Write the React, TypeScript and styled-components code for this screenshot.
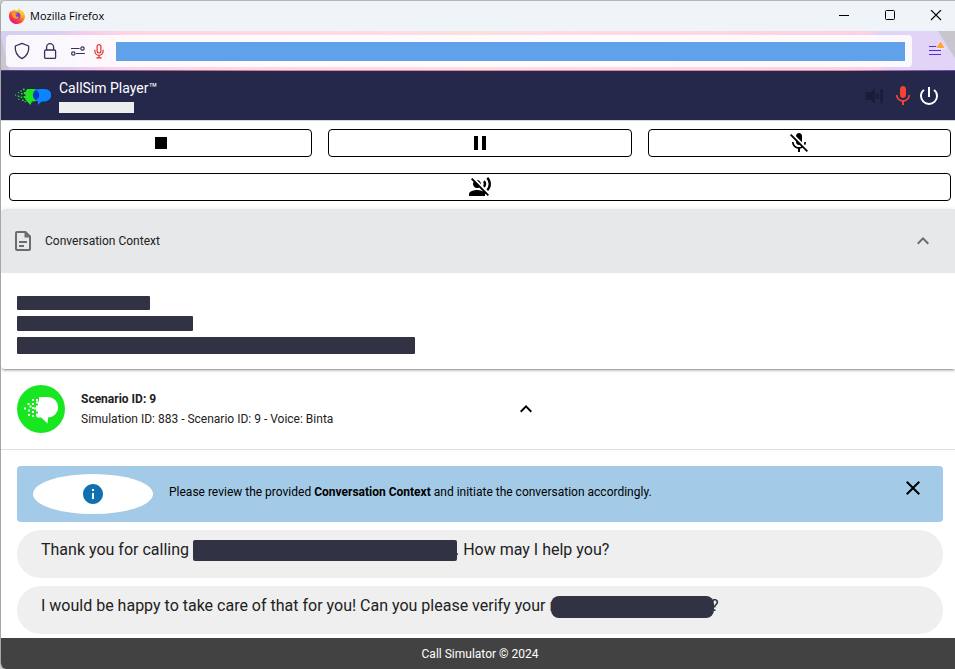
import React, { useState } from "react";
import styled, { createGlobalStyle } from "styled-components";
import {
  MdClose,
  MdExpandLess,
  MdInfo,
  MdMic,
  MdMicOff,
  MdPause,
  MdPowerSettingsNew,
  MdStop,
  MdVoiceOverOff,
} from "react-icons/md";

const GlobalStyle = createGlobalStyle`
  *, *::before, *::after { box-sizing: border-box; }
  body {
    margin: 0;
    background: #c8c8c8;
    color: #212121;
    font-family: Roboto, "Liberation Sans", sans-serif;
    font-size: 12px;
    line-height: 20px;
  }
  button { font: inherit; color: inherit; cursor: pointer; }
  svg { display: block; flex: none; }
`;

const Window = styled.div`
  display: flex;
  flex-direction: column;
  min-height: 100vh;
  overflow: hidden;
  background: #fff;
  border-top: 1px solid #b4b6b8;
  border-left: 1px solid #a6a6a6;
  border-radius: 6px 0 0 6px;
`;

const TitleBar = styled.div`
  display: flex;
  align-items: center;
  gap: 5px;
  height: 30px;
  padding-left: 8px;
  background: #eff4f9;
`;

const WindowTitle = styled.span`
  flex: 1;
  color: #000;
  font-family: "Open Sans", "Noto Sans", sans-serif;
  font-size: 11px;
`;

const WindowControls = styled.div`
  display: flex;
  gap: 8px;
`;

const PlainButton = styled.button<{ $w: number; $h: number }>`
  display: flex;
  align-items: center;
  justify-content: center;
  width: ${(p) => p.$w}px;
  height: ${(p) => p.$h}px;
  padding: 0;
  border: 0;
  background: none;
`;

const BrowserBar = styled.div`
  display: flex;
  align-items: center;
  height: 40px;
  padding-left: 5px;
  background:
    linear-gradient(90deg, #5b3f7a, #d88aa6 30%, #d88aa6 88%, #6a3fb0) bottom / 100% 1px no-repeat,
    linear-gradient(238deg, #c9c5cd 0 14px, transparent 15px),
    linear-gradient(75deg, #cbc5d2 0 8px, #d9cef0 9px 60px, #f3cdf0 90px, #fdd6e4 130px, #fddfe0 50%, #fbd2e6 91%, #e2d4f7 92%);
`;

const AddressBar = styled.div`
  display: flex;
  flex: 1;
  align-items: center;
  height: 32px;
  padding: 0 7px 0 6px;
  border-radius: 4px;
  background: rgba(255, 255, 255, 0.85);
`;

const AddressIcons = styled.div`
  display: flex;
  align-items: center;
  gap: 8px;
  width: 104px;
`;

const AddressInput = styled.input`
  flex: 1;
  min-width: 0;
  height: 19px;
  padding: 0;
  border: 0;
  background: #5fa2e9;
`;

const MenuButton = styled(PlainButton)`
  padding-left: 6px;
`;

const AppHeader = styled.header`
  display: flex;
  align-items: center;
  gap: 8px;
  height: 50px;
  padding: 0 14px;
  background: #25274b;
  border-bottom: 1px solid #d5d6da;
`;

const Brand = styled.div`
  display: flex;
  flex: 1;
  flex-direction: column;
  align-items: flex-start;
  gap: 4px;
`;

const BrandName = styled.h1`
  margin: 0;
  color: #fff;
  font-size: 14px;
  font-weight: 400;
  line-height: 20px;
`;

const HeaderActions = styled.div`
  display: flex;
  gap: 2px;
`;

const Redacted = styled.span<{ $w: number; $h: number; $light?: boolean }>`
  display: block;
  width: ${(p) => p.$w}px;
  max-width: 100%;
  height: ${(p) => p.$h}px;
  border-radius: ${(p) => (p.$light ? 0 : 1)}px;
  background: ${(p) => (p.$light ? "#eceeef" : "#313244")};
`;

const InlineRedacted = styled.span<{ $w: number; $round?: boolean }>`
  display: inline-block;
  width: ${(p) => p.$w}px;
  height: ${(p) => (p.$round ? 22 : 21)}px;
  margin: ${(p) => (p.$round ? "0 -3px 0 -4px" : "0 -2px 0 0")};
  border-radius: ${(p) => (p.$round ? 8 : 2)}px;
  background: #313244;
  position: relative;
  vertical-align: middle;
`;

const Controls = styled.div`
  display: grid;
  grid-template-columns: repeat(3, 1fr);
  gap: 16px;
  padding: 8px 4px 8px 8px;
`;

const ControlButton = styled.button<{ $wide?: boolean }>`
  display: flex;
  align-items: center;
  justify-content: center;
  grid-column: ${(p) => (p.$wide ? "1 / -1" : "auto")};
  height: 28px;
  padding: 0;
  border: 1px solid #000;
  border-radius: 4px;
  background: #fff;
  color: #000;
`;

const ContextPanel = styled.section`
  border-radius: 4px 0 0 4px;
  background: #fff;
  box-shadow: 0 3px 1px -2px rgba(0, 0, 0, 0.2), 0 2px 2px rgba(0, 0, 0, 0.14),
    0 1px 5px rgba(0, 0, 0, 0.12);
`;

const PanelHeader = styled.button`
  display: flex;
  align-items: center;
  gap: 10px;
  width: 100%;
  height: 64px;
  padding: 0 20px 0 10px;
  border: 0;
  border-radius: 4px 0 0 0;
  background: #e7e8ea;
  color: #6c6c6e;
  text-align: left;
`;

const PanelTitle = styled.span`
  flex: 1;
  color: #212121;
`;

const PanelBody = styled.div`
  display: flex;
  flex-direction: column;
  gap: 6px;
  padding: 23px 16px 15px;
`;

const Scenario = styled.section`
  display: grid;
  grid-template-columns: 48px 1fr 1fr;
  gap: 16px;
  align-items: center;
  padding: 16px 24px 16px 16px;
  border-bottom: 1px solid #e0e0e0;
`;

const ScenarioTitle = styled.h2`
  margin: 0;
  font-size: 12px;
  font-weight: 700;
  line-height: 20px;
`;

const ScenarioDetail = styled.p`
  margin: 0;
`;

const Conversation = styled.main`
  display: flex;
  flex: 1;
  flex-direction: column;
  gap: 8px;
  padding: 16px 12px 4px 16px;
`;

const Notice = styled.div`
  display: flex;
  gap: 16px;
  padding: 8px 16px;
  border-radius: 4px;
  background: #a3cbe7;
  color: #000;
`;

const NoticeBadge = styled.span`
  display: flex;
  align-items: center;
  justify-content: center;
  width: 120px;
  height: 40px;
  border-radius: 50%;
  background: #fff;
  color: #1171b0;
`;

const NoticeText = styled.p`
  flex: 1;
  margin: 0;
  padding: 8px 0;
`;

const Message = styled.p`
  min-height: 48px;
  margin: 0;
  padding: 8px 24px;
  border-radius: 24px;
  background: #efefef;
  font-size: 16px;
  line-height: 24px;
`;

const Footer = styled.footer`
  padding: 6px 0 5px 4px;
  background: #424242;
  color: #fff;
  font-size: 12px;
  text-align: center;
`;

const FirefoxLogo = () => (
  <svg width="16" height="16" viewBox="0 0 16 16" aria-hidden="true">
    <defs>
      <linearGradient id="fox" x1="0.85" y1="0.05" x2="0.25" y2="0.95">
        <stop offset="0" stopColor="#fff24a" />
        <stop offset="0.4" stopColor="#ff9a1f" />
        <stop offset="0.7" stopColor="#ff3f45" />
        <stop offset="1" stopColor="#e2177c" />
      </linearGradient>
    </defs>
    <path
      d="M1.4 3.1c.1.5.2.8.4 1C2.6 3 3.6 2.6 4.2 2.6 5 1.6 6 1.4 6.3 1.4c-.3.5-.3.9-.1 1.2C8 2.6 9 2.4 9.3 1.8 9.3 1 9.5.4 10.1 0c.3 1.5 1.5 2.1 2.5 3.1.3 0 .5-.2.6-.5C14.9 4.2 16 6.2 16 8.300 16 12.6 12.4 16 8 16S0 12.600 0 8.200C0 6.200.6 4.400 1.400 3.100Z"
      fill="url(#fox)"
    />
    <circle cx="8" cy="7.800" r="3.400" fill="#7a3fe0" />
    <path d="M2.600 5.200c1.700-.7 3-.5 4.200.3l1.600.3c-.3.9-1.600 1-1.800 1.800.2 1.200 1.800 1.700 3.500.8-.7 2.300-3.100 3.100-5.300 1.600C3.600 8.900 3.100 7 2.600 5.200Z" fill="#ff9a2c" />
    <path d="M10 3.600c2.400 1.500 2.800 4.200 1.900 6.300 1.500-1.200 1.900-3 1.500-4.500-.9-1.400-2-1.900-3.400-1.800Z" fill="#ffc62e" />
  </svg>
);

const ShieldIcon = () => (
  <svg width="20" height="20" viewBox="0 0 20 20" fill="none" stroke="#3b2f57" strokeWidth="1.300" strokeLinejoin="round" aria-hidden="true">
    <path d="M10 2.400 16.700 5c.4 5.200-1.900 10.300-6.700 12.600C5.200 15.300 2.900 10.200 3.300 5Z" />
  </svg>
);

const LockIcon = () => (
  <svg width="20" height="20" viewBox="0 0 20 20" fill="none" stroke="#3b2f57" strokeWidth="1.300" aria-hidden="true">
    <rect x="4.600" y="9" width="11" height="8.400" rx="1.200" />
    <path d="M6.600 9V6.200a3.500 3.500 0 0 1 7 0V9" />
  </svg>
);

const PermissionsIcon = () => (
  <svg width="18" height="16" viewBox="0 0 18 16" fill="none" stroke="#3b2f57" strokeWidth="1.200" aria-hidden="true">
    <path d="M3 5.500h8.600M8 10.500h8.800" />
    <circle cx="14.500" cy="5.500" r="1.700" />
    <circle cx="5.300" cy="10.500" r="1.700" />
  </svg>
);

const BarMicIcon = () => (
  <svg width="10" height="16" viewBox="0 0 10 16" fill="none" stroke="#e2302c" strokeWidth="1.200" aria-hidden="true">
    <rect x="3.100" y="1.600" width="3.800" height="8.400" rx="1.900" />
    <path d="M.9 6.800v1.400a4.100 4.100 0 0 0 8.200 0V6.800M5 12.300v2.400M2.400 14.800h5.200" />
  </svg>
);

const MenuIcon = () => (
  <svg width="18" height="20" viewBox="0 0 18 20" aria-hidden="true">
    <path d="M1 5.500h12M1 9.500h12M1 13.500h12" stroke="#5b2bd0" strokeWidth="1.200" />
    <path d="M12.500-.8c.4 0 .7.200.9.500l4 7c.4.800 0 1.600-.9 1.600H8.500c-.9 0-1.300-.8-.9-1.600l4-7c.2-.3.500-.5.900-.5Z" fill="#eee5fb" />
    <path d="M12.500.900 15.800 6.500H9.200Z" fill="#ffa436" stroke="#ffa436" strokeLinejoin="round" />
  </svg>
);

const DocumentIcon = () => (
  <svg width="24" height="24" viewBox="0 0 24 24" aria-hidden="true">
    <path
      d="M6 3h8.500L19 7.500V20a1 1 0 0 1-1 1H6a1 1 0 0 1-1-1V4a1 1 0 0 1 1-1Z"
      fill="none"
      stroke="currentColor"
      strokeWidth="2"
    />
    <path d="M13.500 3v5.500H19L14.500 3ZM8 12h8v2H8ZM8 16h5v2H8Z" fill="currentColor" />
  </svg>
);

const PlayerLogo = () => (
  <svg width="36" height="18" viewBox="0 0 36 18" aria-label="CallSim logo" role="img">
    <path d="M12 2h7a5.800 6 0 0 1 0 12.400h-2L15.400 18l-3.600-3.800-1.600-1.600V11H8.600V9h1.800V7.200H8.800V5h2V3H12Z" fill="#1ee51e" />
    <path
      d="M8 1.600h1.600v1.600H8zM5.400 3.200h1.500v1.500H5.400zM3 5h1.200v1.200H3zM6 6h1.600v1.600H6zM2.800 8.600h1.500v1.500H2.800zM0 7.600h1.200v1.200H0zM5.600 9.400h1.600V11H5.600zM3.200 11.800h1.200V13H3.200zM7 12.400h1.600V14H7zM9.600 14h1.200v1.200H9.600z"
      fill="#1ee51e"
    />
    <path d="M24 2h6a6.200 6.200 0 0 1 0 12.400h-3.400L22.800 18l.3-3.600C16 12.600 16 3.200 24 2Z" fill="#0a84ff" />
    <path d="M20.800 3.100c4.600 2.600 4.600 7.600 0 10.200-3.700-2.600-3.700-7.600 0-10.200Z" fill="#0b39c4" />
  </svg>
);

const SpeakerIcon = () => (
  <svg width="24" height="24" viewBox="0 0 24 24" fill="#1a1c38" aria-hidden="true">
    <path d="M.7 8h5.100l4.200-3.800v15.600L5.800 16H.7ZM11.300 9.300h2.400v5.800h-2.400ZM15.300 5h2.400v14.200h-2.400Z" />
  </svg>
);

const ScenarioAvatar = () => (
  <svg width="48" height="48" viewBox="0 0 48 48" aria-hidden="true">
    <circle cx="24" cy="24" r="24" fill="#18e621" />
    <path d="M22 12h9a10 10 0 0 1 0 20.400l-.4 6-6.400-6H20v-2h-1v-2h2v-2h-2v-2h-2v-2h2v-2h2v-2h-2v-2h3Z" fill="#fff" />
    <path
      d="M15 14h2v2h-2zM19 14h2v2h-2zM10.500 18h2v2h-2zM15 18h2v2h-2zM12.500 20.500h2v2h-2zM7 22.500h2v2H7zM11 24.500h2v2h-2zM15 22h2v2h-2zM15 26h2v2h-2zM11 29h2v2h-2zM15 30h2v2h-2zM19 29.500h2v2h-2z"
      fill="#fff"
    />
  </svg>
);

const controls = [
  { label: "Stop", Icon: MdStop },
  { label: "Pause", Icon: MdPause },
  { label: "Mute microphone", Icon: MdMicOff },
  { label: "Voice over off", Icon: MdVoiceOverOff, wide: true },
];

export default function App() {
  const [contextOpen, setContextOpen] = useState(true);
  const [noticeOpen, setNoticeOpen] = useState(true);

  return (
    <>
      <GlobalStyle />
      <Window>
        <TitleBar>
          <FirefoxLogo />
          <WindowTitle>Mozilla Firefox</WindowTitle>
          <WindowControls>
            <PlainButton $w={38} $h={30} aria-label="Minimize">
              <svg width="12" height="12" viewBox="0 0 12 12" stroke="#000">
                <path d="M1 5.500h10" />
              </svg>
            </PlainButton>
            <PlainButton $w={38} $h={30} aria-label="Maximize">
              <svg width="12" height="12" viewBox="0 0 12 12" fill="none" stroke="#000">
                <rect x="1.500" y="0.500" width="9" height="9" rx="1" />
              </svg>
            </PlainButton>
            <PlainButton $w={38} $h={30} aria-label="Close window">
              <svg width="12" height="12" viewBox="0 0 12 12" stroke="#000" strokeWidth="1.100">
                <path d="m1 0 10 10M11 0 1 10" />
              </svg>
            </PlainButton>
          </WindowControls>
        </TitleBar>

        <BrowserBar>
          <AddressBar>
            <AddressIcons>
              <ShieldIcon />
              <LockIcon />
              <PermissionsIcon />
              <BarMicIcon />
            </AddressIcons>
            <AddressInput aria-label="Address" />
          </AddressBar>
          <MenuButton $w={43} $h={32} aria-label="Open application menu">
            <MenuIcon />
          </MenuButton>
        </BrowserBar>

        <AppHeader>
          <PlayerLogo />
          <Brand>
            <BrandName>CallSim Player™</BrandName>
            <Redacted $w={75} $h={11} $light />
          </Brand>
          <HeaderActions>
            <PlainButton $w={24} $h={24} aria-label="Speaker">
              <SpeakerIcon />
            </PlainButton>
            <PlainButton $w={24} $h={24} aria-label="Microphone">
              <MdMic size={24} color="#f44336" />
            </PlainButton>
            <PlainButton $w={24} $h={24} aria-label="Power">
              <MdPowerSettingsNew size={24} color="#fff" />
            </PlainButton>
          </HeaderActions>
        </AppHeader>

        <Controls>
          {controls.map(({ label, Icon, wide }) => (
            <ControlButton key={label} $wide={wide} aria-label={label}>
              <Icon size={24} />
            </ControlButton>
          ))}
        </Controls>

        <ContextPanel>
          <PanelHeader aria-expanded={contextOpen} onClick={() => setContextOpen(!contextOpen)}>
            <DocumentIcon />
            <PanelTitle>Conversation Context</PanelTitle>
            <MdExpandLess size={24} />
          </PanelHeader>
          {contextOpen && (
            <PanelBody>
              <Redacted $w={133} $h={14} />
              <Redacted $w={176} $h={15} />
              <Redacted $w={398} $h={17} />
            </PanelBody>
          )}
        </ContextPanel>

        <Scenario>
          <ScenarioAvatar />
          <div>
            <ScenarioTitle>Scenario ID: 9</ScenarioTitle>
            <ScenarioDetail>Simulation ID: 883 - Scenario ID: 9 - Voice: Binta</ScenarioDetail>
          </div>
          <PlainButton $w={24} $h={24} aria-label="Collapse scenario">
            <MdExpandLess size={24} color="#000" />
          </PlainButton>
        </Scenario>

        <Conversation>
          {noticeOpen && (
            <Notice role="status">
              <NoticeBadge>
                <MdInfo size={24} />
              </NoticeBadge>
              <NoticeText>
                Please review the provided <b>Conversation Context</b> and initiate the conversation accordingly.
              </NoticeText>
              <PlainButton $w={28} $h={28} aria-label="Dismiss" onClick={() => setNoticeOpen(false)}>
                <MdClose size={24} />
              </PlainButton>
            </Notice>
          )}
          <Message>
            Thank you for calling <InlineRedacted $w={264} />. How may I help you?
          </Message>
          <Message>
            I would be happy to take care of that for you! Can you please verify your r
            <InlineRedacted $w={163} $round />?
          </Message>
        </Conversation>

        <Footer>Call Simulator © 2024</Footer>
      </Window>
    </>
  );
}
